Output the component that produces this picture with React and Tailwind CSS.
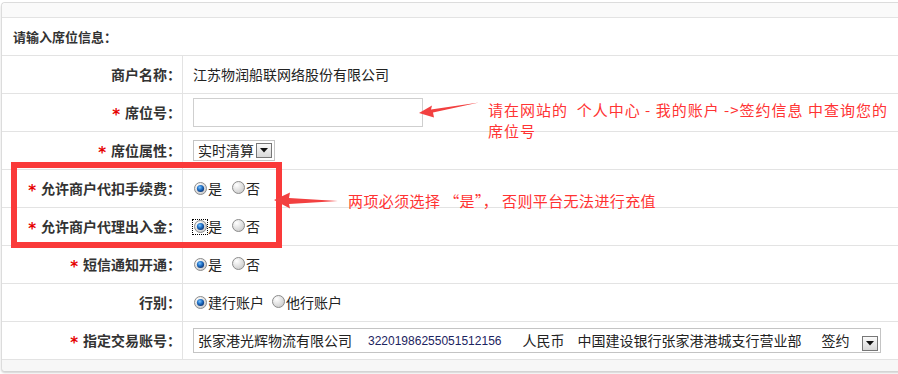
import React from "react";

const cjk = { fontFamily: '"Noto Sans CJK SC", "Noto Sans", sans-serif' };

const Radio = ({ checked, focus }) => (
  <span className={"inline-flex items-center justify-center w-[14px] h-[14px] " + (focus ? "outline outline-1 outline-dotted outline-black" : "")}>
    <svg width="13" height="13" viewBox="0 0 13 13">
      <defs>
        <radialGradient id="rg-off" cx="0.35" cy="0.3" r="0.8">
          <stop offset="0" stopColor="#ffffff" />
          <stop offset="1" stopColor="#c8c8c8" />
        </radialGradient>
        <radialGradient id="rg-on" cx="0.4" cy="0.35" r="0.7">
          <stop offset="0" stopColor="#7cc4ff" />
          <stop offset="0.5" stopColor="#1f6fc4" />
          <stop offset="1" stopColor="#0a2f6e" />
        </radialGradient>
      </defs>
      <circle cx="6.5" cy="6.5" r="6" fill="url(#rg-off)" stroke="#8c8c8c" strokeWidth="1" />
      {checked && <circle cx="6.5" cy="6.5" r="3.6" fill="url(#rg-on)" />}
    </svg>
  </span>
);

const DropBtn = () => (
  <span className="inline-flex items-center justify-center w-[16px] h-[15px] border border-[#777] bg-gradient-to-b from-[#fafafa] to-[#d8d8d8]">
    <svg width="8" height="5" viewBox="0 0 8 5"><path d="M0 0h8L4 4.5z" fill="#111" /></svg>
  </span>
);

const Row = ({ label, star, children }) => (
  <div className="flex h-[38px] border-b border-[#e3e3e3]">
    <div className="w-[181px] shrink-0 border-r border-[#e3e3e3] flex items-center justify-end pr-[1px] text-[14px] font-bold text-[#333]">
      {star && (
        <span className="text-[#e60000] mr-[5px] text-[15px] leading-none translate-y-[3px]" style={{ fontFamily: '"DejaVu Sans", sans-serif' }}>*</span>
      )}
      {label}
    </div>
    <div className="flex items-center pl-[10px] text-[14px] text-[#222]">{children}</div>
  </div>
);

const YesNo = ({ focus }) => (
  <div className="flex items-center">
    <Radio checked focus={focus} />
    <span className="ml-[1px]">是</span>
    <span className="ml-[9px]"><Radio /></span>
    <span className="ml-[1px]">否</span>
  </div>
);

export default function App() {
  return (
    <div className="relative w-[898px] h-[374px] overflow-hidden bg-white" style={cjk}>
      <div className="pt-[2px] pl-[1px]">
        <div className="w-[930px] border-t border-l border-[#dcdcdc] rounded-tl-[4px] rounded-bl-[4px] shadow-[0_2px_2px_rgba(0,0,0,0.18)] bg-white">
          <div className="h-[15px] bg-[#fafafa] border-b border-[#e3e3e3] rounded-tl-[4px]" />
          <div className="h-[38px] border-b border-[#e3e3e3] flex items-center pl-[11px] text-[13px] font-bold text-[#333]">
            请输入席位信息：
          </div>
          <Row label="商户名称：">江苏物润船联网络股份有限公司</Row>
          <Row label="席位号：" star>
            <div className="w-[230px] h-[29px] border border-[#cfcfcf] bg-white" />
          </Row>
          <Row label="席位属性：" star>
            <div className="flex items-center h-[21px] border border-[#c4c4c4] pl-[4px] pr-[2px] gap-[2px]">
              <span>实时清算</span>
              <DropBtn />
            </div>
          </Row>
          <Row label="允许商户代扣手续费：" star>
            <YesNo />
          </Row>
          <Row label="允许商户代理出入金：" star>
            <YesNo focus />
          </Row>
          <Row label="短信通知开通：" star>
            <YesNo />
          </Row>
          <Row label="行别：">
            <div className="flex items-center">
              <Radio checked />
              <span className="ml-[1px]">建行账户</span>
              <span className="ml-[7px]"><Radio /></span>
              <span className="ml-[1px]">他行账户</span>
            </div>
          </Row>
          <Row label="指定交易账号：" star>
            <div className="flex items-center w-[688px] h-[25px] border border-[#c4c4c4] pl-[4px] pr-[2px] whitespace-nowrap">
              <span>张家港光辉物流有限公司</span>
              <span className="ml-[16px] text-[12px] text-[#1c2460]" style={{ fontFamily: '"Liberation Sans", Arial, sans-serif' }}>32201986255051512156</span>
              <span className="ml-[21px]">人民币</span>
              <span className="ml-[13px]">中国建设银行张家港港城支行营业部</span>
              <span className="ml-[20px]">签约</span>
              <span className="ml-auto"><DropBtn /></span>
            </div>
          </Row>
          <div className="h-[11px] bg-[#f7f7f7] rounded-bl-[4px]" />
        </div>
      </div>

      {/* annotation overlay */}
      <div className="absolute left-[11px] top-[162px] w-[271px] h-[86px] border-[6px] border-[#fa3a3a]" />

      <svg className="absolute left-0 top-0" width="898" height="374">
        <polygon points="419,113 432,105.5 431,109.5 479,102.5 433,112.5 434,117.5" fill="#f24040" />
        <polygon points="274,200 290,192.5 289,198 338,201 289,204 290,208.5" fill="#f24040" />
      </svg>

      <div className="absolute left-[488px] top-[99px] w-[412px] text-[15px] leading-[21px] tracking-[1px] text-[#f33] whitespace-pre">
        {"请在网站的  个人中心 - 我的账户 ->签约信息 中查询您的\n席位号"}
      </div>
      <div className="absolute left-[348px] top-[190px] text-[15px] leading-[21px] tracking-[0.4px] text-[#f33] whitespace-pre">
        {"两项必须选择 \u201c是\u201d， 否则平台无法进行充值"}
      </div>
    </div>
  );
}
